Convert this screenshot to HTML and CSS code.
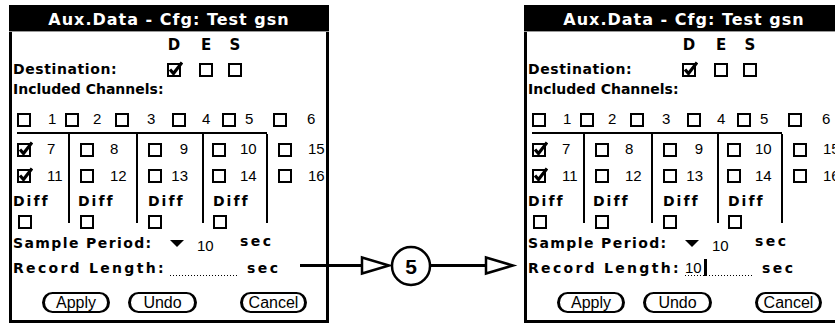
FILE: index.html
```html
<!DOCTYPE html>
<html lang="en">
<head>
  <meta charset="UTF-8" />
  <title>Aux.Data - Cfg: Test gsn</title>
  <link rel="stylesheet" href="styles.css">
</head>
<body>
  <svg class="defs" width="0" height="0">
    <defs>
      <symbol id="box" viewBox="0 0 16 16">
        <rect x="1" y="3" width="12" height="12" fill="#fff" stroke="#000" stroke-width="2"/>
      </symbol>
      <symbol id="chk" viewBox="0 0 16 16">
        <rect x="1" y="3" width="12" height="12" fill="#fff" stroke="#000" stroke-width="2"/>
        <path d="M3 8.5 L6.5 12.5 L15 1.5" fill="none" stroke="#000" stroke-width="3.2"/>
      </symbol>
    </defs>
  </svg>

  <div class="stage">
    <!-- before -->
    <div class="screen">
      <div class="title">Aux.Data - Cfg: Test gsn</div>
      <div class="trio des">
        <span></span><span class="l">D</span><span class="l">E</span><span class="l">S</span>
      </div>
      <div class="trio dest">
        <span class="lbl w-dest">Destination:</span>
        <svg class="cb"><use href="#chk"/></svg>
        <svg class="cb"><use href="#box"/></svg>
        <svg class="cb"><use href="#box"/></svg>
      </div>
      <div class="incl">Included Channels:</div>
      <div class="ch1">
        <svg class="cb"><use href="#box"/></svg><span class="num">1</span>
        <svg class="cb"><use href="#box"/></svg><span class="num">2</span>
        <svg class="cb"><use href="#box"/></svg><span class="num">3</span>
        <svg class="cb"><use href="#box"/></svg><span class="num">4</span>
        <svg class="cb"><use href="#box"/></svg><span class="num">5</span>
        <svg class="cb"><use href="#box"/></svg><span class="num">6</span>
      </div>
      <div class="rule"></div>
      <div class="grid">
        <div class="col c1">
          <div class="cell r7"><svg class="cb"><use href="#chk"/></svg><span class="num">7</span></div>
          <div class="cell r11"><svg class="cb"><use href="#chk"/></svg><span class="num">11</span></div>
          <div class="cell rdiff"><span class="diff">Diff</span></div>
          <div class="cell rbox"><svg class="cb"><use href="#box"/></svg></div>
        </div>
        <div class="col c2">
          <div class="cell r7"><svg class="cb"><use href="#box"/></svg><span class="num">8</span></div>
          <div class="cell r11"><svg class="cb"><use href="#box"/></svg><span class="num">12</span></div>
          <div class="cell rdiff"><span class="diff">Diff</span></div>
          <div class="cell rbox"><svg class="cb"><use href="#box"/></svg></div>
        </div>
        <div class="col c3">
          <div class="cell r7"><svg class="cb"><use href="#box"/></svg><span class="num">9</span></div>
          <div class="cell r11"><svg class="cb"><use href="#box"/></svg><span class="num">13</span></div>
          <div class="cell rdiff"><span class="diff">Diff</span></div>
          <div class="cell rbox"><svg class="cb"><use href="#box"/></svg></div>
        </div>
        <div class="col c4">
          <div class="cell r7"><svg class="cb"><use href="#box"/></svg><span class="num">10</span></div>
          <div class="cell r11"><svg class="cb"><use href="#box"/></svg><span class="num">14</span></div>
          <div class="cell rdiff"><span class="diff">Diff</span></div>
          <div class="cell rbox"><svg class="cb"><use href="#box"/></svg></div>
        </div>
        <div class="col c5">
          <div class="cell r7"><svg class="cb"><use href="#box"/></svg><span class="num">15</span></div>
          <div class="cell r11"><svg class="cb"><use href="#box"/></svg><span class="num">16</span></div>
        </div>
      </div>
      <div class="sample">
        <span class="lbl w-sample">Sample Period:</span>
        <span class="drop"></span>
        <span class="num period">10</span>
        <span class="sec up">sec</span>
      </div>
      <div class="record">
        <span class="lbl w-record">Record Length:</span>
        <span class="field"></span>
        <span class="sec">sec</span>
      </div>
      <div class="btns">
        <span class="btn apply">Apply</span>
        <span class="btn undo">Undo</span>
        <span class="btn cancel">Cancel</span>
      </div>
    </div>

    <!-- after -->
    <div class="screen">
      <div class="title">Aux.Data - Cfg: Test gsn</div>
      <div class="trio des">
        <span></span><span class="l">D</span><span class="l">E</span><span class="l">S</span>
      </div>
      <div class="trio dest">
        <span class="lbl w-dest">Destination:</span>
        <svg class="cb"><use href="#chk"/></svg>
        <svg class="cb"><use href="#box"/></svg>
        <svg class="cb"><use href="#box"/></svg>
      </div>
      <div class="incl">Included Channels:</div>
      <div class="ch1">
        <svg class="cb"><use href="#box"/></svg><span class="num">1</span>
        <svg class="cb"><use href="#box"/></svg><span class="num">2</span>
        <svg class="cb"><use href="#box"/></svg><span class="num">3</span>
        <svg class="cb"><use href="#box"/></svg><span class="num">4</span>
        <svg class="cb"><use href="#box"/></svg><span class="num">5</span>
        <svg class="cb"><use href="#box"/></svg><span class="num">6</span>
      </div>
      <div class="rule"></div>
      <div class="grid">
        <div class="col c1">
          <div class="cell r7"><svg class="cb"><use href="#chk"/></svg><span class="num">7</span></div>
          <div class="cell r11"><svg class="cb"><use href="#chk"/></svg><span class="num">11</span></div>
          <div class="cell rdiff"><span class="diff">Diff</span></div>
          <div class="cell rbox"><svg class="cb"><use href="#box"/></svg></div>
        </div>
        <div class="col c2">
          <div class="cell r7"><svg class="cb"><use href="#box"/></svg><span class="num">8</span></div>
          <div class="cell r11"><svg class="cb"><use href="#box"/></svg><span class="num">12</span></div>
          <div class="cell rdiff"><span class="diff">Diff</span></div>
          <div class="cell rbox"><svg class="cb"><use href="#box"/></svg></div>
        </div>
        <div class="col c3">
          <div class="cell r7"><svg class="cb"><use href="#box"/></svg><span class="num">9</span></div>
          <div class="cell r11"><svg class="cb"><use href="#box"/></svg><span class="num">13</span></div>
          <div class="cell rdiff"><span class="diff">Diff</span></div>
          <div class="cell rbox"><svg class="cb"><use href="#box"/></svg></div>
        </div>
        <div class="col c4">
          <div class="cell r7"><svg class="cb"><use href="#box"/></svg><span class="num">10</span></div>
          <div class="cell r11"><svg class="cb"><use href="#box"/></svg><span class="num">14</span></div>
          <div class="cell rdiff"><span class="diff">Diff</span></div>
          <div class="cell rbox"><svg class="cb"><use href="#box"/></svg></div>
        </div>
        <div class="col c5">
          <div class="cell r7"><svg class="cb"><use href="#box"/></svg><span class="num">15</span></div>
          <div class="cell r11"><svg class="cb"><use href="#box"/></svg><span class="num">16</span></div>
        </div>
      </div>
      <div class="sample">
        <span class="lbl w-sample">Sample Period:</span>
        <span class="drop"></span>
        <span class="num period">10</span>
        <span class="sec up">sec</span>
      </div>
      <div class="record">
        <span class="lbl w-record">Record Length:</span>
        <span class="field"><span class="num">10</span><span class="caret"></span></span>
        <span class="sec">sec</span>
      </div>
      <div class="btns">
        <span class="btn apply">Apply</span>
        <span class="btn undo">Undo</span>
        <span class="btn cancel">Cancel</span>
      </div>
    </div>

    <!-- step arrow between the two screens -->
    <svg class="arrow" width="232" height="44" viewBox="296 244 232 44">
      <line x1="300" y1="265.5" x2="362" y2="265.5" stroke="#000" stroke-width="3"/>
      <polygon points="362,257.5 389,265.5 362,273.5" fill="#fff" stroke="#000" stroke-width="2.5"/>
      <circle cx="411" cy="266" r="19" fill="#fff" stroke="#000" stroke-width="2.5"/>
      <text class="step" x="411" y="273.5" text-anchor="middle">5</text>
      <line x1="430" y1="265.5" x2="486" y2="265.5" stroke="#000" stroke-width="3"/>
      <polygon points="486,257.5 513,265.5 486,273.5" fill="#fff" stroke="#000" stroke-width="2.5"/>
    </svg>
  </div>
</body>
</html>
```

FILE: styles.css
```css
body {
  margin: 0;
  background: #fff;
  overflow: hidden;
}

.defs {
  position: absolute;
}

.stage {
  position: relative;
  display: flex;
  gap: 195px;
  padding: 5px 0 0 9px;
  width: max-content;
}

.screen {
  flex: none;
  width: 320px;
  height: 318px;
  box-sizing: border-box;
  border: 3px solid #000;
  border-top: 0;
  font-family: 'DejaVu Sans', Verdana, sans-serif;
  font-weight: bold;
  font-size: 14px;
  color: #000;
}

.title {
  height: 26px;
  margin: 0 -3px;
  background: #000;
  color: #fff;
  border-bottom: 1px solid #999;
  text-align: center;
  font-size: 16px;
  letter-spacing: 1px;
  line-height: 29px;
}

.cb {
  flex: none;
  width: 16px;
  height: 16px;
  display: block;
}

.num {
  font-family: 'Liberation Sans', Arial, sans-serif;
  font-weight: normal;
  font-size: 15px;
}

/* D E S header + destination boxes share columns */
.trio {
  display: grid;
  grid-template-columns: 155px 32px 29px 16px;
  align-items: center;
}

.des {
  margin-top: 1px;
  height: 24px;
  font-size: 15px;
}

.des .l {
  width: 14px;
  text-align: center;
}

.dest {
  height: 23px;
}

.lbl {
  padding-left: 1px;
  letter-spacing: 1px;
}

.w-dest { letter-spacing: 0.6px; }

.incl {
  height: 18px;
  line-height: 18px;
  padding-left: 1px;
}

.ch1 {
  margin-top: 7px;
  height: 27px;
  padding-left: 5px;
  display: grid;
  grid-template-columns: 31px 17px 28px 22px 32px 25px 30px 20px 23px 28px 34px auto;
  align-items: center;
}

.rule {
  margin-left: 5px;
  width: 250px;
  height: 2px;
  background: #000;
}

.grid {
  display: flex;
  height: 89px;
  margin-left: 1px;
}

.col {
  box-sizing: border-box;
  border-right: 2px solid #000;
  display: flex;
  flex-direction: column;
}

.c1 { width: 57px; }
.c2 { width: 68px; }
.c3 { width: 66px; }
.c4 { width: 64px; }
.c5 { border-right: 0; flex: 1; }

.cell {
  display: flex;
  align-items: center;
}

.r7 { height: 29px; }
.r11 { height: 24px; }
.rdiff { height: 27px; }

.rbox {
  height: 9px;
  align-items: flex-start;
}

.rbox .cb {
  margin-top: -1px;
}

.diff {
  letter-spacing: 2px;
}

.c1 .cb { margin-left: 4px; }
.c1 .num { margin-left: 14px; }
.c1 .rbox .cb { margin-left: 5px; }

.c2 .cb { margin-left: 10px; }
.c2 .num { margin-left: 14px; }
.c2 .diff { margin-left: 8px; }

.c3 .cb { margin-left: 10px; }
.c3 .num { width: 24px; text-align: right; }
.c3 .diff { margin-left: 10px; }

.c4 .cb { margin-left: 8px; }
.c4 .num { margin-left: 12px; }
.c4 .diff { margin-left: 9px; }
.c4 .rbox .cb { margin-left: 9px; }

.c5 .cb { margin-left: 10px; }
.c5 .num { margin-left: 14px; }

.sample {
  margin-top: 5px;
  height: 30px;
  display: flex;
  align-items: center;
}

.sample .lbl,
.record .lbl {
  flex: none;
  box-sizing: border-box;
  width: 158px;
  white-space: nowrap;
}

.w-sample { letter-spacing: 1.4px; }
.w-record { letter-spacing: 2.3px; }

.drop {
  flex: none;
  width: 0;
  height: 0;
  border-left: 7px solid transparent;
  border-right: 7px solid transparent;
  border-top: 7px solid #000;
  margin-right: 13px;
}

.period {
  width: 43px;
  margin-top: 4px;
}

.sec {
  letter-spacing: 2.5px;
}

.sec.up {
  margin-bottom: 5px;
}

.record {
  height: 20px;
  display: flex;
  align-items: center;
}

.field {
  flex: none;
  align-self: flex-start;
  display: flex;
  align-items: center;
  width: 67px;
  height: 17px;
  margin-top: 1px;
  background: repeating-linear-gradient(90deg, #000 0 1px, transparent 1px 3px) left bottom / 100% 1px no-repeat;
}

.caret {
  width: 3px;
  height: 17px;
  margin-left: 2px;
  background: #000;
}

.record .sec {
  margin-left: 10px;
}

.btns {
  margin-top: 14px;
  padding-left: 30px;
  display: flex;
}

.btn {
  box-sizing: border-box;
  height: 21px;
  border: 2px solid #000;
  border-left-width: 3px;
  border-right-width: 3px;
  border-radius: 11px;
  font-family: 'Liberation Sans', Arial, sans-serif;
  font-weight: normal;
  font-size: 16px;
  line-height: 17px;
  text-align: center;
}

.apply { width: 68px; }
.undo { width: 69px; margin-left: 18px; }
.cancel { width: 67px; margin-left: 43px; }

.arrow {
  position: absolute;
  left: 296px;
  top: 244px;
}

.step {
  font-family: 'Liberation Sans', Arial, sans-serif;
  font-weight: bold;
  font-size: 21px;
}
```
